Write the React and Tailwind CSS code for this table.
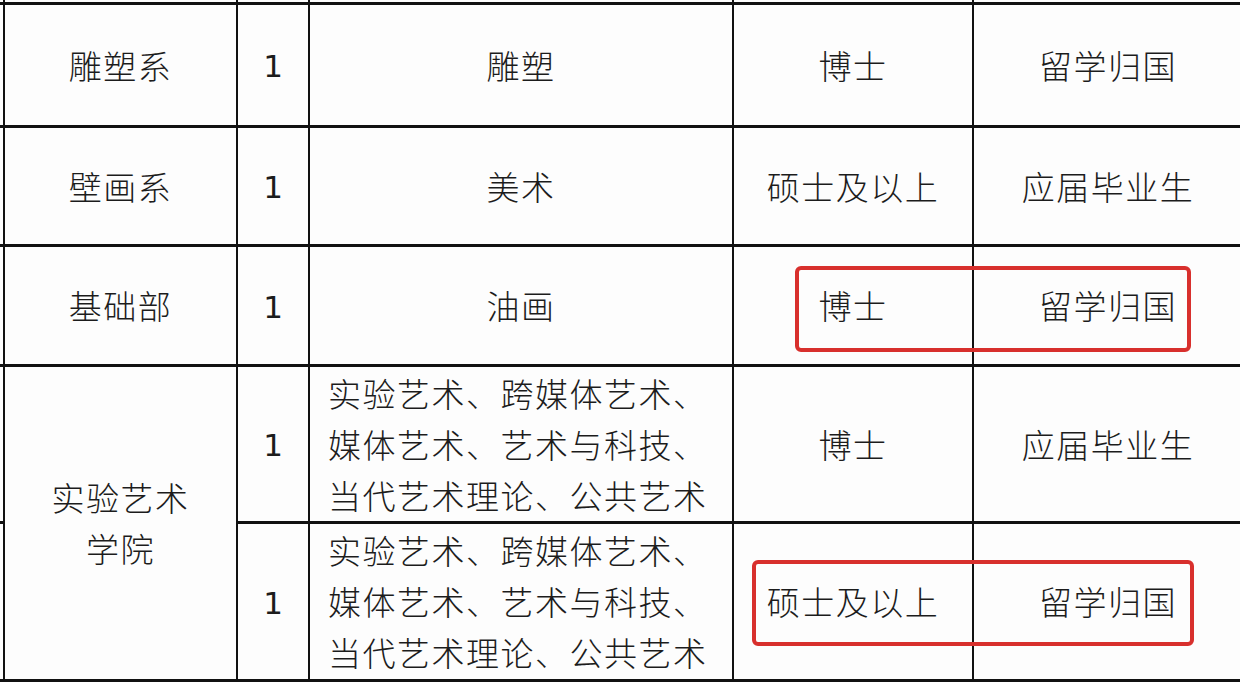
import React from 'react';

const cjk = { fontFamily: '"Noto Sans CJK SC", "Noto Sans", sans-serif' };
const digit = { fontFamily: '"DejaVu Sans", "Liberation Sans", sans-serif' };

const Cell = ({ children, className = '' }) => (
  <div className={`flex items-center justify-center bg-[#fdfdfd] text-[#1c1c1c] ${className}`}>
    {children}
  </div>
);

const Zh = ({ children, className = '' }) => (
  <span style={cjk} className={`text-[33px] font-light leading-[51px] tracking-[1.5px] ${className}`}>
    {children}
  </span>
);

const Num = () => (
  <span style={digit} className="pt-[3px] text-[31px] font-normal leading-none">1</span>
);

const Majors = () => (
  <div style={cjk} className="flex w-full flex-col pl-[18px] text-[33px] font-light leading-[51px] tracking-[1.5px]">
    <span>实验艺术、跨媒体艺术、</span>
    <span>媒体艺术、艺术与科技、</span>
    <span>当代艺术理论、公共艺术</span>
  </div>
);

const rows = [
  { dept: '雕塑系', major: '雕塑', degree: '博士', source: '留学归国' },
  { dept: '壁画系', major: '美术', degree: '硕士及以上', source: '应届毕业生' },
  { dept: '基础部', major: '油画', degree: '博士', source: '留学归国' },
];

export default function App() {
  return (
    <div className="relative h-[682px] w-[1240px] overflow-hidden bg-white">
      <div className="grid grid-cols-[3px_231px_70px_422px_238px_280px] grid-rows-[2px_120px_116px_117px_154px_155px] gap-x-[2px] gap-y-[3px] bg-[#111] pb-[3px]">
        {/* top stub row */}
        <div className="bg-[#fdfdfd]" />
        <div className="bg-[#fdfdfd]" />
        <div className="bg-[#fdfdfd]" />
        <div className="bg-[#fdfdfd]" />
        <div className="bg-[#fdfdfd]" />
        <div className="bg-[#fdfdfd]" />

        {rows.map((r) => (
          <React.Fragment key={r.dept}>
            <div className="bg-[#fdfdfd]" />
            <Cell><Zh>{r.dept}</Zh></Cell>
            <Cell><Num /></Cell>
            <Cell><Zh>{r.major}</Zh></Cell>
            <Cell><Zh>{r.degree}</Zh></Cell>
            <Cell className="pr-[12px]"><Zh>{r.source}</Zh></Cell>
          </React.Fragment>
        ))}

        {/* 实验艺术学院, two rows */}
        <div className="bg-[#fdfdfd]" />
        <Cell className="row-span-2">
          <div className="flex flex-col items-center">
            <Zh>实验艺术</Zh>
            <Zh>学院</Zh>
          </div>
        </Cell>
        <Cell><Num /></Cell>
        <Cell><Majors /></Cell>
        <Cell><Zh>博士</Zh></Cell>
        <Cell className="pr-[12px]"><Zh>应届毕业生</Zh></Cell>

        <div className="bg-[#fdfdfd]" />
        <Cell><Num /></Cell>
        <Cell><Majors /></Cell>
        <Cell><Zh>硕士及以上</Zh></Cell>
        <Cell className="pr-[12px]"><Zh>留学归国</Zh></Cell>
      </div>

      {/* red highlight marks */}
      <div className="absolute left-[795px] top-[266px] h-[86px] w-[396px] rounded-[6px] border-[4px] border-[#d8302d]" />
      <div className="absolute left-[752px] top-[560px] h-[86px] w-[442px] rounded-[6px] border-[4px] border-[#d8302d]" />
    </div>
  );
}
